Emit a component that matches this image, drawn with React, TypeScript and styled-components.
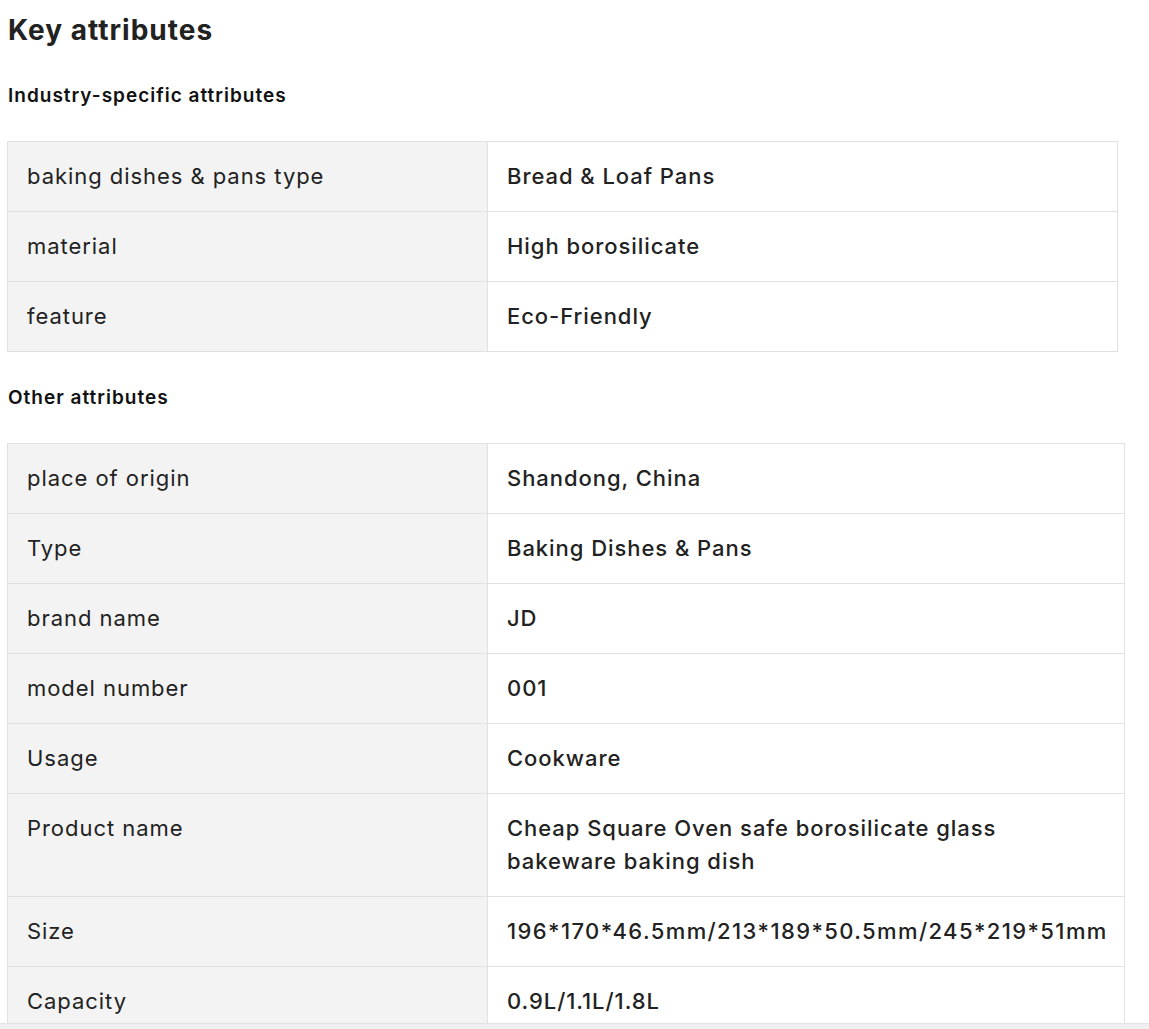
import React from "react";
import styled, { createGlobalStyle } from "styled-components";

const GlobalStyle = createGlobalStyle`
  html, body { margin: 0; padding: 0; background: #fff; }
  body { font-family: Inter, "Noto Sans", Arial, sans-serif; color: #222; }
`;

const Page = styled.div`
  padding: 0 7px 40px 7px;
`;

const Title = styled.h2`
  margin: 0;
  padding-top: 12px;
  padding-left: 1px;
  font-size: 28px;
  line-height: 36px;
  font-weight: 700;
  letter-spacing: 1px;
  color: #222;
`;

const Section = styled.section`
  display: flex;
  flex-direction: column;
  align-items: flex-start;
`;

const SubTitle = styled.h3<{ $first?: boolean }>`
  margin: 0;
  padding-left: 1px;
  font-size: 19px;
  line-height: 26px;
  font-weight: 600;
  letter-spacing: 1px;
  color: #111;
  padding-top: ${(p) => (p.$first ? "35px" : "33px")};
  padding-bottom: 32px;
`;

const AttrGrid = styled.div`
  display: grid;
  grid-template-columns: 480px minmax(630px, min-content);
  border-top: 1px solid #e1e1e1;
  border-left: 1px solid #e1e1e1;
  font-size: 22px;
  line-height: 33px;
  letter-spacing: 0.95px;
`;

const LabelCell = styled.div`
  background: #f3f3f3;
  border-right: 1px solid #e1e1e1;
  border-bottom: 1px solid #e1e1e1;
  padding: 18px 20px 18px 19px;
  color: #222;
  font-weight: 400;
`;

const ValueCell = styled.div<{ $wide?: boolean }>`
  border-right: 1px solid #e1e1e1;
  border-bottom: 1px solid #e1e1e1;
  padding: 18px 16px 18px 19px;
  color: #222;
  font-weight: 500;
  letter-spacing: ${(p) => (p.$wide ? "1.4px" : "0.95px")};
`;

const BottomBar = styled.div`
  position: fixed;
  left: 0;
  right: 0;
  bottom: 0;
  height: 5px;
  background: #f0f0f0;
  border-top: 1px solid #e2e2e2;
`;

type Row = [string, string];

const industry: Row[] = [
  ["baking dishes & pans type", "Bread & Loaf Pans"],
  ["material", "High borosilicate"],
  ["feature", "Eco-Friendly"],
];

const other: Row[] = [
  ["place of origin", "Shandong, China"],
  ["Type", "Baking Dishes & Pans"],
  ["brand name", "JD"],
  ["model number", "001"],
  ["Usage", "Cookware"],
  ["Product name", "Cheap Square Oven safe borosilicate glass bakeware baking dish"],
  ["Size", "196*170*46.5mm/213*189*50.5mm/245*219*51mm"],
  ["Capacity", "0.9L/1.1L/1.8L"],
];

const AttrTable = ({ rows }: { rows: Row[] }) => (
  <AttrGrid>
    {rows.map(([k, v]) => (
      <React.Fragment key={k}>
        <LabelCell>{k}</LabelCell>
        <ValueCell $wide={v.includes("*")}>{v}</ValueCell>
      </React.Fragment>
    ))}
  </AttrGrid>
);

export default function App() {
  return (
    <>
      <GlobalStyle />
      <Page>
        <Title>Key attributes</Title>
        <Section>
          <SubTitle $first>Industry-specific attributes</SubTitle>
          <AttrTable rows={industry} />
        </Section>
        <Section>
          <SubTitle>Other attributes</SubTitle>
          <AttrTable rows={other} />
        </Section>
      </Page>
      <BottomBar />
    </>
  );
}
